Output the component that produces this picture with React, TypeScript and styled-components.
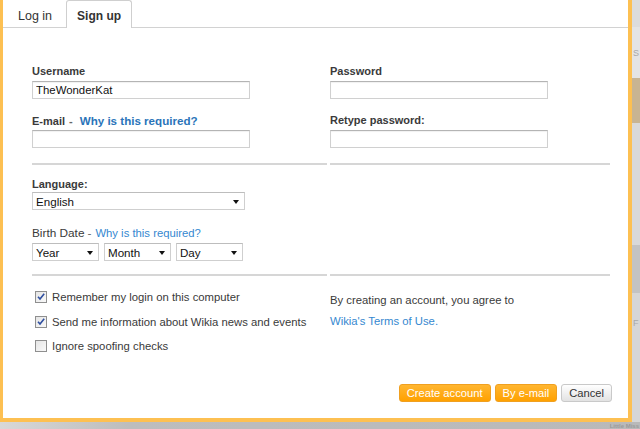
import styled, { createGlobalStyle } from 'styled-components'

const GlobalStyle = createGlobalStyle`
  html, body {
    margin: 0;
    padding: 0;
  }
  body {
    width: 640px;
    height: 429px;
    overflow: hidden;
    background: #d6d6d6;
    font-family: "Liberation Sans", Arial, sans-serif;
    font-size: 11.3px;
    color: #3a3a3a;
  }
`

const Screen = styled.div`
  width: 640px;
  height: 429px;
  display: grid;
  grid-template-columns: 632px 8px;
  grid-template-rows: 422px 7px;
  overflow: hidden;
`

const Dialog = styled.div`
  box-sizing: border-box;
  background: #ffffff;
  border-style: solid;
  border-color: #fdc052;
  border-width: 0 4px 4px 3px;
  display: flex;
  flex-direction: column;
`

const SideStrip = styled.div`
  display: flex;
  flex-direction: column;
  background: #d9d9d9;
  overflow: hidden;
`

const SideBlock = styled.div<{ $h: number; $bg: string }>`
  height: ${p => p.$h}px;
  flex: none;
  background: ${p => p.$bg};
  color: #a8a8a8;
  font-size: 9px;
  padding-left: 1px;
  display: flex;
  align-items: center;
  overflow: hidden;
`

const BottomStrip = styled.div`
  grid-column: 1 / span 2;
  background: linear-gradient(to right, #d8d8d8, #bdbdbd 20%, #b9b9b9);
  display: flex;
  justify-content: flex-end;
  align-items: flex-end;
  overflow: hidden;
`

const BehindText = styled.span`
  font-size: 6px;
  font-weight: bold;
  color: #9a9a9a;
  line-height: 6px;
  white-space: nowrap;
  padding-right: 1px;
`

const TabBar = styled.div`
  height: 28px;
  box-sizing: border-box;
  flex: none;
  display: flex;
  align-items: flex-end;
  gap: 2px;
  padding-left: 3px;
  border-bottom: 1px solid #d2d2d2;
`

const Tab = styled.div<{ $active?: boolean }>`
  box-sizing: border-box;
  height: ${p => (p.$active ? 28 : 27)}px;
  margin-bottom: ${p => (p.$active ? -1 : 0)}px;
  padding: 3px ${p => (p.$active ? 10 : 11)}px 0;
  line-height: 24px;
  font-size: ${p => (p.$active ? 12 : 12.5)}px;
  font-weight: ${p => (p.$active ? 'bold' : 'normal')};
  color: #333;
  background: #fff;
  border: 1px solid ${p => (p.$active ? '#cfcfcf' : 'transparent')};
  border-bottom: none;
  border-radius: 3px 3px 0 0;
`

const Form = styled.div`
  flex: 1;
  display: flex;
  flex-direction: column;
  padding: 36px 18px 16px 29px;
`

const Section = styled.div<{ $top?: number }>`
  display: grid;
  grid-template-columns: 295px 280px;
  column-gap: 3px;
  padding-top: ${p => p.$top ?? 0}px;
`

const Cell = styled.div<{ $bottom: number; $ruled?: boolean; $gap?: number }>`
  display: flex;
  flex-direction: column;
  gap: ${p => p.$gap ?? 0}px;
  padding-bottom: ${p => p.$bottom}px;
  border-bottom: ${p => (p.$ruled ? '2px solid #d6d6d6' : 'none')};
`

const Field = styled.div<{ $labelGap?: number }>`
  display: flex;
  flex-direction: column;
  gap: ${p => p.$labelGap ?? 2}px;
`

const Label = styled.div<{ $plain?: boolean }>`
  height: 15px;
  font-size: ${p => (p.$plain ? 11.8 : 11)}px;
  font-weight: ${p => (p.$plain ? 'normal' : 'bold')};
  line-height: 15px;
  color: #3a3a3a;
  white-space: nowrap;
`

const Dash = styled.span<{ $wide?: boolean }>`
  color: #666;
  margin: 0 ${p => (p.$wide ? 7 : 4)}px 0 ${p => (p.$wide ? 4 : 3)}px;
`

const Link = styled.a<{ $bold?: boolean; $size?: number }>`
  color: ${p => (p.$bold ? '#2a74b9' : '#3588d0')};
  font-weight: ${p => (p.$bold ? 'bold' : 'normal')};
  font-size: ${p => (p.$size ? `${p.$size}px` : 'inherit')};
  text-decoration: none;
  cursor: pointer;
`

const TextInput = styled.input`
  box-sizing: border-box;
  width: 218px;
  height: 18px;
  margin: 0;
  padding: 0 3px;
  border: 1px solid #d0d0d0;
  border-top-color: #b4b4b4;
  box-shadow: inset 0 1px 1px rgba(0, 0, 0, 0.06);
  font-family: "Liberation Sans", Arial, sans-serif;
  font-size: 11.4px;
  color: #111;
  outline: none;
`

const SelectBox = styled.div<{ $w: number }>`
  box-sizing: border-box;
  width: ${p => p.$w}px;
  height: 18px;
  padding: 0 5px 0 3px;
  border: 1px solid #cfcfcf;
  border-top-color: #bdbdbd;
  display: flex;
  align-items: center;
  justify-content: space-between;
  font-size: 11.6px;
  color: #111;
  background: #fff;
`

const Arrow = styled.span`
  width: 0;
  height: 0;
  border-left: 3.5px solid transparent;
  border-right: 3.5px solid transparent;
  border-top: 4px solid #111;
  margin-top: 1px;
`

const DateRow = styled.div`
  display: flex;
  gap: 5px;
`

const CheckList = styled.div`
  display: flex;
  flex-direction: column;
  padding-top: 9px;
`

const CheckRow = styled.label`
  height: 24.5px;
  display: flex;
  align-items: center;
  gap: 5px;
  padding-left: 3px;
  font-size: 11.3px;
  color: #3a3a3a;
  white-space: nowrap;
`

const Terms = styled.div`
  padding-top: 14px;
  font-size: 11.3px;
  line-height: 21px;
  color: #3a3a3a;
`

const Footer = styled.div`
  flex: 1;
  display: flex;
  justify-content: flex-end;
  align-items: flex-end;
  gap: 4px;
  margin-right: -2px;
`

const Button = styled.button<{ $primary?: boolean }>`
  box-sizing: border-box;
  height: 18px;
  padding: 0 7px;
  margin: 0;
  border-radius: 3px;
  border: 1px solid ${p => (p.$primary ? '#f0a020' : '#c9c9c9')};
  background: ${p =>
    p.$primary
      ? 'linear-gradient(to bottom, #ffb631, #ffa100)'
      : 'linear-gradient(to bottom, #ffffff, #e2e2e2)'};
  color: ${p => (p.$primary ? '#ffffff' : '#333333')};
  font-family: "Liberation Sans", Arial, sans-serif;
  font-size: 11.2px;
  line-height: 16px;
  cursor: pointer;
`

const CheckBox = ({ checked }: { checked?: boolean }) => (
  <svg width="12" height="12" viewBox="0 0 12 12">
    <defs>
      <linearGradient id="cbg" x1="0" y1="0" x2="1" y2="1">
        <stop offset="0" stopColor="#e4e4e4" />
        <stop offset="1" stopColor="#fafafa" />
      </linearGradient>
    </defs>
    <rect x="0.5" y="0.5" width="11" height="11" fill="url(#cbg)" stroke="#8f8f8f" />
    {checked && (
      <path d="M3 5.8 L5 8 L9.2 2.8" fill="none" stroke="#2f4fa0" strokeWidth="1.6" />
    )}
  </svg>
)

const App = () => (
  <>
    <GlobalStyle />
    <Screen>
      <Dialog>
        <TabBar>
          <Tab>Log in</Tab>
          <Tab $active>Sign up</Tab>
        </TabBar>
        <Form>
          <Section>
            <Cell $bottom={15} $ruled $gap={14}>
              <Field>
                <Label>Username</Label>
                <TextInput defaultValue="TheWonderKat" />
              </Field>
              <Field>
                <Label>
                  E-mail<Dash $wide>-</Dash>
                  <Link $bold $size={11.6}>Why is this required?</Link>
                </Label>
                <TextInput />
              </Field>
            </Cell>
            <Cell $bottom={15} $ruled $gap={14}>
              <Field>
                <Label>Password</Label>
                <TextInput type="password" />
              </Field>
              <Field>
                <Label>Retype password:</Label>
                <TextInput type="password" />
              </Field>
            </Cell>
          </Section>

          <Section $top={12}>
            <Cell $bottom={13} $ruled $gap={16}>
              <Field $labelGap={0}>
                <Label>Language:</Label>
                <SelectBox $w={213}>
                  English
                  <Arrow />
                </SelectBox>
              </Field>
              <Field $labelGap={2}>
                <Label $plain>
                  Birth Date<Dash>-</Dash>
                  <Link $size={11.3}>Why is this required?</Link>
                </Label>
                <DateRow>
                  <SelectBox $w={67}>
                    Year
                    <Arrow />
                  </SelectBox>
                  <SelectBox $w={67}>
                    Month
                    <Arrow />
                  </SelectBox>
                  <SelectBox $w={67}>
                    Day
                    <Arrow />
                  </SelectBox>
                </DateRow>
              </Field>
            </Cell>
            <Cell $bottom={13} $ruled />
          </Section>

          <Section>
            <CheckList>
              <CheckRow>
                <CheckBox checked />
                Remember my login on this computer
              </CheckRow>
              <CheckRow>
                <CheckBox checked />
                Send me information about Wikia news and events
              </CheckRow>
              <CheckRow>
                <CheckBox />
                Ignore spoofing checks
              </CheckRow>
            </CheckList>
            <Terms>
              By creating an account, you agree to
              <br />
              <Link>Wikia's Terms of Use.</Link>
            </Terms>
          </Section>

          <Footer>
            <Button $primary>Create account</Button>
            <Button $primary>By e-mail</Button>
            <Button>Cancel</Button>
          </Footer>
        </Form>
      </Dialog>

      <SideStrip>
        <SideBlock $h={27} $bg="#dcdcdc" />
        <SideBlock $h={51} $bg="#e4e4e4">S</SideBlock>
        <SideBlock $h={45} $bg="#c8b492" />
        <SideBlock $h={122} $bg="#d9d9d9" />
        <SideBlock $h={48} $bg="#c3c3c3" />
        <SideBlock $h={60} $bg="#d6d6d6">F</SideBlock>
        <SideBlock $h={69} $bg="#d6d6d6" />
      </SideStrip>

      <BottomStrip>
        <BehindText>Little Miss</BehindText>
      </BottomStrip>
    </Screen>
  </>
)

export default App
